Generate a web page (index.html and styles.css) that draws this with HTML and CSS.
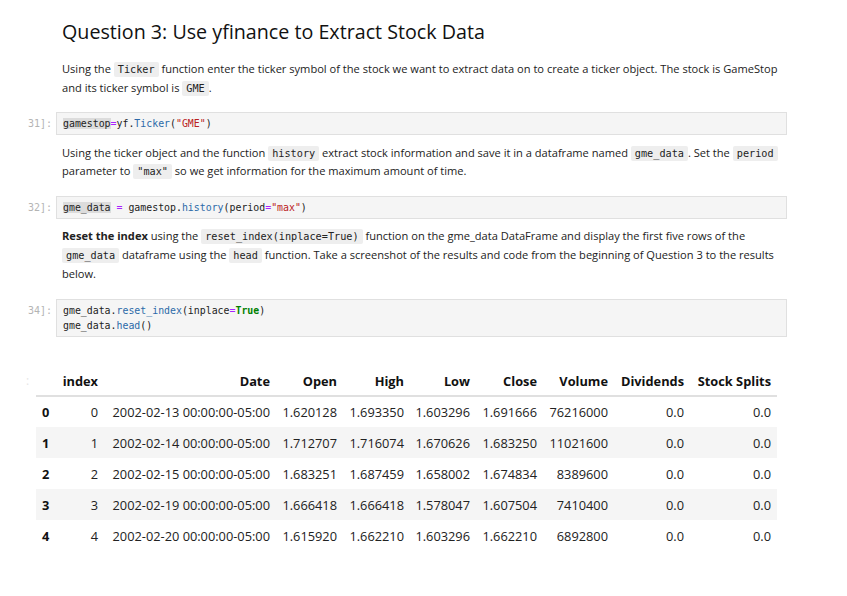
FILE: index.html
```html
<!DOCTYPE html>
<html>
<head>
<meta charset="utf-8">
<link rel="stylesheet" href="styles.css">
</head>
<body>
<div class="nb">
  <div class="cell md first">
    <div class="prompt"></div>
    <div class="content">
      <h2 class="title">Question 3: Use yfinance to Extract Stock Data</h2>
      <p class="text">Using the <code class="ic">Ticker</code> function enter the ticker symbol of the stock we want to extract data on to create a ticker object. The stock is GameStop and its ticker symbol is <code class="ic">GME</code>.</p>
    </div>
  </div>

  <div class="cell code c1">
    <div class="prompt">31]:</div>
    <div class="content"><pre class="src"><span class="hl">gamestop</span><span class="op">=</span>yf.<span class="pr">Ticker</span>(<span class="st">"GME"</span>)</pre></div>
  </div>

  <div class="cell md m2">
    <div class="prompt"></div>
    <div class="content">
      <p class="text">Using the ticker object and the function <code class="ic">history</code> extract stock information and save it in a dataframe named <code class="ic">gme_data</code>. Set the <code class="ic">period</code> parameter to <code class="ic">"max"</code> so we get information for the maximum amount of time.</p>
    </div>
  </div>

  <div class="cell code c2">
    <div class="prompt">32]:</div>
    <div class="content"><pre class="src"><span class="hl">gme_data</span> <span class="op">=</span> gamestop.<span class="pr">history</span>(period<span class="op">=</span><span class="st">"max"</span>)</pre></div>
  </div>

  <div class="cell md m3">
    <div class="prompt"></div>
    <div class="content">
      <p class="text"><b>Reset the index</b> using the <code class="ic">reset_index(inplace=True)</code> function on the gme_data DataFrame and display the first five rows of the <code class="ic">gme_data</code> dataframe using the <code class="ic">head</code> function. Take a screenshot of the results and code from the beginning of Question 3 to the results below.</p>
    </div>
  </div>

  <div class="cell code c3">
    <div class="prompt">34]:</div>
    <div class="content"><pre class="src">gme_data.<span class="pr">reset_index</span>(inplace<span class="op">=</span><span class="kw">True</span>)
gme_data.<span class="pr">head</span>()</pre></div>
  </div>

  <div class="output">
    <div class="oprompt">:</div>
    <table class="df">
      <colgroup>
        <col class="w0"><col class="w1"><col class="w2"><col class="w3"><col class="w4"><col class="w5"><col class="w6"><col class="w7"><col class="w8"><col class="w9">
      </colgroup>
      <thead>
        <tr><th></th><th>index</th><th>Date</th><th>Open</th><th>High</th><th>Low</th><th>Close</th><th>Volume</th><th>Dividends</th><th>Stock Splits</th></tr>
      </thead>
      <tbody>
        <tr><th>0</th><td>0</td><td>2002-02-13 00:00:00-05:00</td><td>1.620128</td><td>1.693350</td><td>1.603296</td><td>1.691666</td><td>76216000</td><td>0.0</td><td>0.0</td></tr>
        <tr><th>1</th><td>1</td><td>2002-02-14 00:00:00-05:00</td><td>1.712707</td><td>1.716074</td><td>1.670626</td><td>1.683250</td><td>11021600</td><td>0.0</td><td>0.0</td></tr>
        <tr><th>2</th><td>2</td><td>2002-02-15 00:00:00-05:00</td><td>1.683251</td><td>1.687459</td><td>1.658002</td><td>1.674834</td><td>8389600</td><td>0.0</td><td>0.0</td></tr>
        <tr><th>3</th><td>3</td><td>2002-02-19 00:00:00-05:00</td><td>1.666418</td><td>1.666418</td><td>1.578047</td><td>1.607504</td><td>7410400</td><td>0.0</td><td>0.0</td></tr>
        <tr><th>4</th><td>4</td><td>2002-02-20 00:00:00-05:00</td><td>1.615920</td><td>1.662210</td><td>1.603296</td><td>1.662210</td><td>6892800</td><td>0.0</td><td>0.0</td></tr>
      </tbody>
    </table>
  </div>
</div>
</body>
</html>
```

FILE: styles.css
```css
html, body {
  margin: 0;
  padding: 0;
  background: #ffffff;
}
body {
  font-family: "Open Sans", "Noto Sans", sans-serif;
  color: #212121;
  width: 847px;
  height: 596px;
  overflow: hidden;
}
.nb {
  width: 787px;
  padding-top: 18px;
}
.cell {
  display: flex;
  align-items: flex-start;
}
.prompt {
  width: 56px;
  flex: 0 0 56px;
  box-sizing: border-box;
  padding-right: 4px;
  text-align: right;
  font-family: "DejaVu Sans Mono", monospace;
  font-size: 10px;
  color: #b4b4b4;
}
.content {
  flex: 1;
  min-width: 0;
}
.md .content {
  padding-left: 6px;
}
.title {
  margin: 0;
  font-size: 19.7px;
  font-weight: 400;
  line-height: 28px;
  color: #111111;
}
.text {
  margin: 0;
  font-size: 11.1px;
  line-height: 18.75px;
  color: #222222;
}
.text b {
  font-weight: 700;
}
.first .text {
  margin-top: 14px;
}
.ic {
  font-family: "DejaVu Sans Mono", monospace;
  font-size: 10.2px;
  line-height: 1;
  background: #eeeeee;
  padding: 2px 4px;
  border-radius: 2px;
  color: #222222;
}
.code .prompt {
  line-height: 15px;
  padding-top: 4px;
}
.src {
  margin: 0;
  background: #f5f5f5;
  border: 1px solid #e0e0e0;
  padding: 3px 6px;
  font-family: "DejaVu Sans Mono", monospace;
  font-size: 9.9px;
  line-height: 15px;
  color: #222222;
}
.c1 { margin-top: 14px; }
.m2 { margin-top: 9px; }
.c2 { margin-top: 15px; }
.m3 { margin-top: 8px; }
.c3 { margin-top: 16px; }
.hl { background: #dcdcdc; }
.op { color: #aa22ff; }
.pr { color: #2c6aa8; }
.st { color: #ba2121; }
.kw { color: #008000; font-weight: 700; }

.output {
  display: flex;
  margin-top: 30px;
}
.oprompt {
  width: 36px;
  flex: 0 0 36px;
  box-sizing: border-box;
  padding-left: 26px;
  color: #e6e6e6;
  font-size: 12px;
  line-height: 28px;
}
.df {
  border-collapse: collapse;
  table-layout: fixed;
  width: 741px;
  font-family: "Open Sans", "Noto Sans", sans-serif;
  font-size: 12.8px;
  color: #222222;
}
.w0 { width: 20px; }
.w1 { width: 48px; }
.w2 { width: 172px; }
.w3 { width: 67px; }
.w4 { width: 67px; }
.w5 { width: 66px; }
.w6 { width: 67px; }
.w7 { width: 71px; }
.w8 { width: 76px; }
.w9 { width: 87px; }
.df th, .df td {
  text-align: right;
  padding: 0 6px 0 0;
  white-space: nowrap;
  overflow: visible;
}
.df thead th {
  font-weight: 700;
  height: 28px;
  border-bottom: 2px solid #e0e0e0;
  color: #111111;
}
.df tbody th {
  font-weight: 700;
  text-align: left;
  padding-left: 6px;
  color: #111111;
}
.df tbody tr {
  height: 31px;
}
.df tbody tr:nth-child(even) {
  background: #f5f5f5;
}
```
